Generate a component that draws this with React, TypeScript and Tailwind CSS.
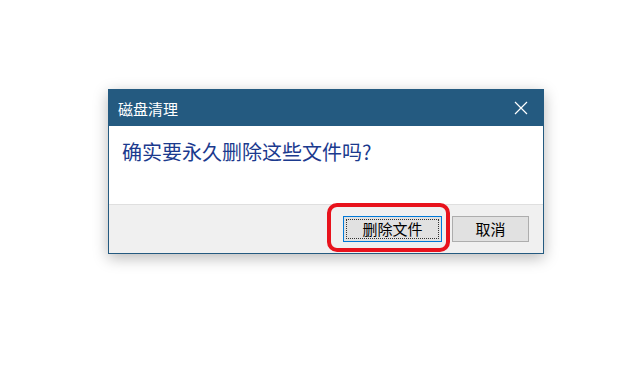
export default function App() {
  const font = { fontFamily: '"Microsoft YaHei", "Noto Sans CJK SC", "Noto Sans", sans-serif' };

  return (
    <div className="w-[640px] h-[380px] bg-white overflow-hidden" style={font}>
      <div className="pt-[89px] pl-[108px]">
        <div className="w-[436px] border border-[#245a80] bg-white shadow-[0_4px_14px_rgba(0,0,0,0.28)]">
          {/* title bar */}
          <div className="h-[36px] bg-[#245a80] flex items-center justify-between pl-[9px] pr-[14px]">
            <span className="text-white text-[15px] leading-none">磁盘清理</span>
            <svg width="14" height="14" viewBox="0 0 14 14" className="mr-[1px]">
              <path d="M1 1 L13 13 M13 1 L1 13" stroke="#ffffff" strokeWidth="1.2" />
            </svg>
          </div>

          {/* body */}
          <div className="h-[78px] pl-[13px] pt-[12px]">
            <p className="text-[20px] leading-[28px] text-[#1b3a8e]">确实要永久删除这些文件吗?</p>
          </div>

          {/* footer */}
          <div className="h-[49px] bg-[#f0f0f0] border-t border-[#dfdfdf] flex items-start justify-end gap-[10px] pt-[11px] pr-[14px]">
            <div className="relative">
              <button className="w-[99px] h-[26px] bg-[#e1e1e1] border border-[#0078d7] p-[2px] text-[15px] text-black">
                <span className="flex items-center justify-center w-full h-full border border-dotted border-[#333]">
                  删除文件
                </span>
              </button>
              <div className="absolute left-[-16px] top-[-13px] w-[123px] h-[49px] rounded-[10px] border-[4px] border-[#e8121c] pointer-events-none" />
            </div>
            <button className="w-[77px] h-[26px] bg-[#e1e1e1] border border-[#adadad] text-[15px] text-black flex items-center justify-center">
              取消
            </button>
          </div>
        </div>
      </div>
    </div>
  );
}
